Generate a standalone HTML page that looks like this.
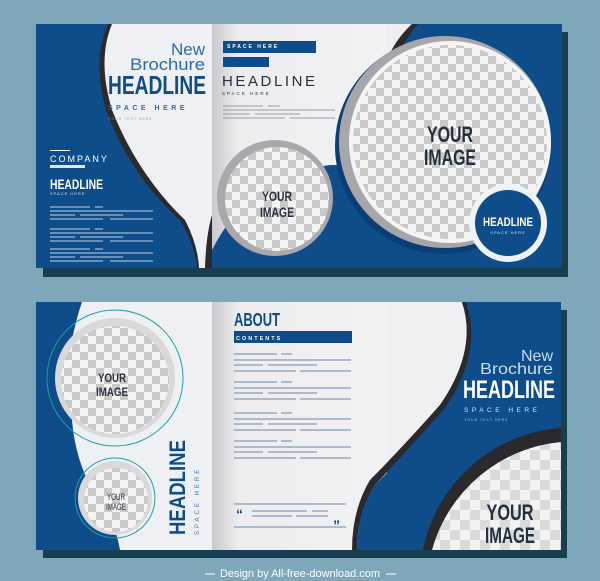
<!DOCTYPE html>
<html><head><meta charset="utf-8"><style>
html,body{margin:0;padding:0;background:#7ea7b9;overflow:hidden;width:600px;height:581px}
svg{display:block}
text{font-family:"Liberation Sans",sans-serif}
</style></head><body>
<svg width="600" height="581" viewBox="0 0 600 581" xmlns="http://www.w3.org/2000/svg">
<defs>
<pattern id="ck" width="16" height="16" patternUnits="userSpaceOnUse">
<rect width="16" height="16" fill="#f4f4f4"/><rect width="8" height="8" fill="#c9c9c9"/><rect x="8" y="8" width="8" height="8" fill="#c9c9c9"/>
</pattern>
<pattern id="ck2" width="20" height="20" patternUnits="userSpaceOnUse">
<rect width="20" height="20" fill="#f2f2f2"/><rect width="10" height="10" fill="#dadada"/><rect x="10" y="10" width="10" height="10" fill="#dadada"/>
</pattern>
<linearGradient id="mid" x1="0" x2="1"><stop offset="0" stop-color="#c9c9cc"/><stop offset="0.15" stop-color="#ededef"/><stop offset="1" stop-color="#f2f2f4"/></linearGradient>
<clipPath id="br"><rect x="36" y="302" width="525" height="248"/></clipPath>
</defs>
<rect width="600" height="581" fill="#7ea7b9"/>

<!-- TOP BROCHURE -->
<rect x="43" y="32" width="525" height="245" fill="#163f4f"/>
<rect x="36" y="24" width="526" height="244" fill="#0f4c8a"/>
<rect x="212" y="24" width="175" height="244" fill="url(#mid)"/>
<path d="M212,268 L212,250 Q250,175 330,165 L387,165 L387,268 Z" fill="#0f4c8a"/>
<path d="M387,24 L412,24 Q395,40 387,60 Z" fill="#eeeef0"/>
<path d="M412,24 L418,24 Q400,45 390,75 L387,80 L387,60 Q395,40 412,24Z" fill="#2a2a2e"/>
<path d="M108,24 Q92,60 106,110 Q130,175 180,220 Q195,245 197,268 L212,268 L212,24 Z" fill="#2b2b2e"/>
<path d="M112,24 Q97,60 112,110 Q138,175 185,220 Q198,245 199,268 L205,268 Q206,235 212,215 L212,24 Z" fill="#eff0f3"/>
<circle cx="275" cy="198" r="58" fill="#a9a9ad"/>
<circle cx="277" cy="199" r="52" fill="url(#ck)"/>
<text x="277" y="201" font-size="14" font-weight="bold" fill="#2a3140" text-anchor="middle" textLength="30" lengthAdjust="spacingAndGlyphs">YOUR</text>
<text x="277" y="217" font-size="14" font-weight="bold" fill="#2a3140" text-anchor="middle" textLength="34" lengthAdjust="spacingAndGlyphs">IMAGE</text>
<circle cx="443" cy="146" r="108" fill="#0a3f75"/>
<circle cx="445" cy="142" r="106" fill="#a7a7ab"/>
<circle cx="450" cy="142" r="101" fill="#f4f4f4"/>
<circle cx="450" cy="142" r="97" fill="url(#ck)"/>
<text x="450" y="142" font-size="22" font-weight="bold" fill="#243040" text-anchor="middle" textLength="46" lengthAdjust="spacingAndGlyphs">YOUR</text>
<text x="450" y="165" font-size="22" font-weight="bold" fill="#243040" text-anchor="middle" textLength="52" lengthAdjust="spacingAndGlyphs">IMAGE</text>
<circle cx="508" cy="223" r="39" fill="#eef3f8"/>
<circle cx="508" cy="223" r="33" fill="#0f4c8a"/>
<text x="508" y="226" font-size="12" font-weight="bold" fill="#fff" text-anchor="middle" textLength="50" lengthAdjust="spacingAndGlyphs">HEADLINE</text>
<text x="508" y="234" font-size="4" fill="#cfe0f0" text-anchor="middle" letter-spacing="1">SPACE HERE</text>
<text x="205" y="55" font-size="17" fill="#2d6cab" text-anchor="end">New</text>
<text x="205" y="70" font-size="17" fill="#2d6cab" text-anchor="end" textLength="75" lengthAdjust="spacingAndGlyphs">Brochure</text>
<text x="108" y="94" font-size="26" font-weight="bold" fill="#0f4c8a" textLength="98" lengthAdjust="spacingAndGlyphs">HEADLINE</text>
<text x="108" y="110" font-size="7" font-weight="bold" fill="#2d6cab" letter-spacing="3.5">SPACE HERE</text>
<text x="108" y="120" font-size="3.5" fill="#8aa0b6" letter-spacing="1">YOUR TEXT HERE</text>
<rect x="50" y="150" width="20" height="1" fill="#fff"/>
<text x="50" y="162" font-size="9" fill="#fff" letter-spacing="2">COMPANY</text>
<rect x="50" y="165" width="35" height="3" fill="#dfe8f2"/>
<text x="50" y="189" font-size="14" font-weight="bold" fill="#fff" textLength="53" lengthAdjust="spacingAndGlyphs">HEADLINE</text>
<text x="50" y="195" font-size="4" fill="#cfe0f0" letter-spacing="1">SPACE HERE</text>
<g stroke="#c0d2e6" stroke-width="1">
<path d="M50,207H90M95,207H103M50,211H153M50,215H75M80,215H123M50,219H103M110,219H153"/>
<path d="M50,229H90M95,229H103M50,233H153M50,237H75M80,237H123M50,241H103M110,241H153"/>
<path d="M50,249H90M95,249H103M50,253H153M50,257H75M80,257H123M50,261H103M110,261H153"/>
</g>
<rect x="223" y="41" width="93" height="12" fill="#0f4c8a"/>
<text x="227" y="48" font-size="5" font-weight="bold" fill="#fff" letter-spacing="2">SPACE HERE</text>
<rect x="223" y="57" width="46" height="10" fill="#0f4c8a"/>
<text x="222" y="86" font-size="15" fill="#253040" textLength="93" lengthAdjust="spacing">HEADLINE</text>
<text x="222" y="95" font-size="4.5" fill="#253040" letter-spacing="2">SPACE HERE</text>
<g stroke="#9a9aa2" stroke-width="1"><path d="M223,106H263M268,106H280M223,110H335M223,114H250M255,114H300M223,118H285M290,118H335"/></g>

<!-- BOTTOM BROCHURE -->
<rect x="43" y="310" width="524" height="248" fill="#163f4f"/>
<rect x="36" y="302" width="525" height="248" fill="#0f4c8a"/>
<path d="M82,302 L212,302 L212,550 L120,550 Q115,520 95,495 Q75,460 72,420 Q62,360 82,302Z" fill="#eff0f3"/>
<rect x="212" y="302" width="175" height="248" fill="url(#mid)"/>
<path d="M387,302 L462,302 Q478,350 440,405 Q400,450 370,480 Q352,510 352,550 L387,550 Z" fill="#f0f0f2"/>
<path d="M462,302 Q478,350 440,405 Q400,450 370,480 Q352,510 352,550 L357,550 Q357,515 375,485 Q406,452 445,408 Q483,352 466,302Z" fill="#2a2a2e"/>
<path d="M387,550 L357,550 Q357,515 375,485 Q382,478 387,473Z" fill="#0f4c8a"/>
<circle cx="115" cy="378" r="68" fill="none" stroke="#1aa0a8" stroke-width="1"/>
<circle cx="115" cy="378" r="60" fill="#d9d9dc"/>
<circle cx="115" cy="380" r="54" fill="url(#ck)"/>
<text x="112" y="382" font-size="12" font-weight="bold" fill="#2a3140" text-anchor="middle" textLength="28" lengthAdjust="spacingAndGlyphs">YOUR</text>
<text x="112" y="396" font-size="12" font-weight="bold" fill="#2a3140" text-anchor="middle" textLength="32" lengthAdjust="spacingAndGlyphs">IMAGE</text>
<circle cx="115" cy="498" r="40" fill="none" stroke="#1aa0a8" stroke-width="1"/>
<circle cx="115" cy="498" r="37" fill="#d9d9dc"/>
<circle cx="116" cy="500" r="32" fill="url(#ck)"/>
<text x="116" y="500" font-size="9" fill="#2a3140" text-anchor="middle" textLength="18" lengthAdjust="spacingAndGlyphs">YOUR</text>
<text x="116" y="510" font-size="9" fill="#2a3140" text-anchor="middle" textLength="20" lengthAdjust="spacingAndGlyphs">IMAGE</text>
<text transform="translate(185,535) rotate(-90)" font-size="22" font-weight="bold" fill="#0f4c8a" textLength="95" lengthAdjust="spacingAndGlyphs">HEADLINE</text>
<text transform="translate(199,535) rotate(-90)" font-size="6" fill="#2d6cab" letter-spacing="3">SPACE HERE</text>
<text x="234" y="326" font-size="18" font-weight="bold" fill="#0f4c8a" textLength="46" lengthAdjust="spacingAndGlyphs">ABOUT</text>
<rect x="234" y="331" width="118" height="12" fill="#0f4c8a"/>
<text x="236" y="340" font-size="5.5" font-weight="bold" fill="#fff" letter-spacing="2">CONTENTS</text>
<g stroke="#6a86a8" stroke-width="1">
<path d="M234,354H277M281,354H292M234,360H351M234,365H263M268,365H317M234,371H296M300,371H351"/>
<path d="M234,382H277M281,382H292M234,388H351M234,393H263M268,393H317M234,399H296M300,399H351"/>
<path d="M234,413H277M281,413H292M234,419H351M234,424H263M268,424H317M234,430H296M300,430H351"/>
<path d="M234,441H277M281,441H292M234,447H351M234,452H263M268,452H317M234,458H296M300,458H351"/>
<path d="M234,504H346M252,511H307M312,511H328M252,516H292M296,516H328M234,527H346"/>
</g>
<text x="236" y="519" font-size="14" font-weight="bold" fill="#0f4c8a">“</text>
<text x="333" y="530" font-size="14" font-weight="bold" fill="#0f4c8a">”</text>
<g clip-path="url(#br)">
<path d="M423,550 A152,152 0 0 1 561,428 L561,550 Z" fill="#2a2a2e"/>
<path d="M432,550 A148,148 0 0 1 561,442 L561,550 Z" fill="url(#ck2)"/>
</g>
<text x="510" y="520" font-size="22" font-weight="bold" fill="#243040" text-anchor="middle" textLength="47" lengthAdjust="spacingAndGlyphs">YOUR</text>
<text x="510" y="543" font-size="22" font-weight="bold" fill="#243040" text-anchor="middle" textLength="50" lengthAdjust="spacingAndGlyphs">IMAGE</text>
<text x="553" y="361" font-size="16" fill="#c8dcef" text-anchor="end">New</text>
<text x="553" y="374" font-size="16" fill="#c8dcef" text-anchor="end" textLength="73" lengthAdjust="spacingAndGlyphs">Brochure</text>
<text x="463" y="398" font-size="25" font-weight="bold" fill="#fff" textLength="92" lengthAdjust="spacingAndGlyphs">HEADLINE</text>
<text x="464" y="412" font-size="6.5" fill="#d8e6f3" letter-spacing="3.5">SPACE HERE</text>
<text x="464" y="421" font-size="3.5" fill="#a8c0d8" letter-spacing="1">YOUR TEXT HERE</text>
<path d="M205,574H215M386,574H396" stroke="#fff" stroke-width="1"/>
<text x="300" y="577" font-size="11" fill="#fff" text-anchor="middle" textLength="160" lengthAdjust="spacingAndGlyphs">Design by All-free-download.com</text>
</svg>
</body></html>
